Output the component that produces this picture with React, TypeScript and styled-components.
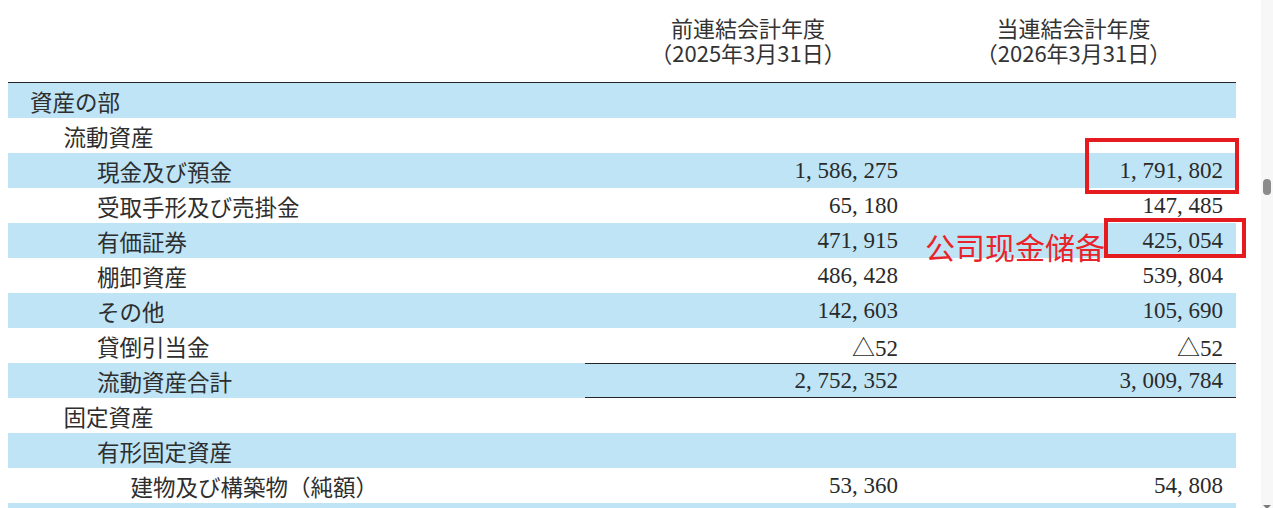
import React from "react";
import styled, { createGlobalStyle } from "styled-components";

const GlobalStyle = createGlobalStyle`
  html, body {
    margin: 0;
    padding: 0;
    background: #ffffff;
  }

  body {
    overflow: hidden;
    color: #2a2a2a;
    font-family: "Noto Sans CJK JP", "Liberation Serif", serif;
  }
`;

type Row = {
  label: string;
  level: number;
  prev?: string;
  curr?: string;
  total?: boolean;
};

const rows: Row[] = [
  { label: "資産の部", level: 0 },
  { label: "流動資産", level: 1 },
  { label: "現金及び預金", level: 2, prev: "1,586,275", curr: "1,791,802" },
  { label: "受取手形及び売掛金", level: 2, prev: "65,180", curr: "147,485" },
  { label: "有価証券", level: 2, prev: "471,915", curr: "425,054" },
  { label: "棚卸資産", level: 2, prev: "486,428", curr: "539,804" },
  { label: "その他", level: 2, prev: "142,603", curr: "105,690" },
  { label: "貸倒引当金", level: 2, prev: "△52", curr: "△52" },
  { label: "流動資産合計", level: 2, prev: "2,752,352", curr: "3,009,784", total: true },
  { label: "固定資産", level: 1 },
  { label: "有形固定資産", level: 2 },
  { label: "建物及び構築物（純額）", level: 3, prev: "53,360", curr: "54,808" },
  { label: "", level: 3 },
];

const formatValue = (value?: string) =>
  value
    ? value.split(",").map((part, index) => (
        <React.Fragment key={index}>
          {index > 0 && <Comma>,</Comma>}
          {part}
        </React.Fragment>
      ))
    : null;

const BalanceSheet = () => {
  return (
    <Page>
      <GlobalStyle />
      <Main>
        <Sheet>
          <HeaderRow>
            <HeaderCell />
            <HeaderCell>
              前連結会計年度
              <br />
              （2025年3月31日）
            </HeaderCell>
            <HeaderCell>
              当連結会計年度
              <br />
              （2026年3月31日）
            </HeaderCell>
          </HeaderRow>

          {rows.map((row, index) => (
            <Line key={index} $shaded={index % 2 === 0}>
              <Label $level={row.level}>{row.label}</Label>
              <Value $total={row.total}>{formatValue(row.prev)}</Value>
              <Value $total={row.total}>{formatValue(row.curr)}</Value>
            </Line>
          ))}

          <Marker $left={1077} $top={138} $width={154} $height={56} />
          <Marker $left={1096} $top={218} $width={142} $height={40} />
          <Note>公司现金储备</Note>
        </Sheet>
      </Main>
      <Track>
        <Thumb />
        <Arrow />
      </Track>
    </Page>
  );
};

const Page = styled.div`
  display: flex;
  height: 508px;
  overflow: hidden;
`;

const Main = styled.div`
  flex: 1;
  padding-left: 8px;
`;

const Sheet = styled.div`
  position: relative;
  width: 1228px;
`;

const columns = "577px 326px 325px";

const HeaderRow = styled.div`
  display: grid;
  grid-template-columns: ${columns};
  align-items: center;
  height: 83px;
  box-sizing: border-box;
  padding-bottom: 2px;
  border-bottom: 1px solid #262626;
`;

const HeaderCell = styled.div`
  text-align: center;
  font-size: 22px;
  line-height: 25px;
  color: #333333;
`;

const Line = styled.div<{ $shaded: boolean }>`
  display: grid;
  grid-template-columns: ${columns};
  height: 35px;
  background: ${({ $shaded }) => ($shaded ? "#bee4f6" : "#ffffff")};
`;

const Label = styled.div<{ $level: number }>`
  display: flex;
  align-items: center;
  padding-left: ${({ $level }) => 22 + $level * 33.5}px;
  font-size: 22.5px;
  color: #2e2e2e;
  white-space: nowrap;
`;

const Value = styled.div<{ $total?: boolean }>`
  display: flex;
  align-items: center;
  justify-content: flex-end;
  padding-right: 13px;
  box-sizing: border-box;
  font-family: "Liberation Serif", "Noto Sans CJK JP", serif;
  font-size: 23px;
  color: #2a2a2a;
  border-top: ${({ $total }) => ($total ? "1px solid #262626" : "none")};
  border-bottom: ${({ $total }) => ($total ? "1px solid #262626" : "none")};
`;

const Comma = styled.span`
  display: inline-block;
  width: 0.5em;
  text-align: left;
`;

const Marker = styled.div<{ $left: number; $top: number; $width: number; $height: number }>`
  position: absolute;
  left: ${({ $left }) => $left}px;
  top: ${({ $top }) => $top}px;
  width: ${({ $width }) => $width}px;
  height: ${({ $height }) => $height}px;
  box-sizing: border-box;
  border: 4px solid #e41c1f;
`;

const Note = styled.div`
  position: absolute;
  left: 917px;
  top: 229px;
  font-family: "Noto Sans CJK SC", sans-serif;
  font-size: 30px;
  line-height: 34px;
  color: #e8242a;
  white-space: nowrap;
`;

const Track = styled.div`
  width: 12px;
  display: flex;
  flex-direction: column;
  align-items: center;
  background: #f7f7f7;
`;

const Thumb = styled.div`
  margin-top: 179px;
  width: 8px;
  height: 16px;
  border-radius: 4px;
  background: #8b8b8b;
`;

const Arrow = styled.div`
  margin-top: auto;
  margin-bottom: -1px;
  width: 0;
  height: 0;
  border-left: 4px solid transparent;
  border-right: 4px solid transparent;
  border-top: 4px solid #7a7a7a;
`;

export default BalanceSheet;
